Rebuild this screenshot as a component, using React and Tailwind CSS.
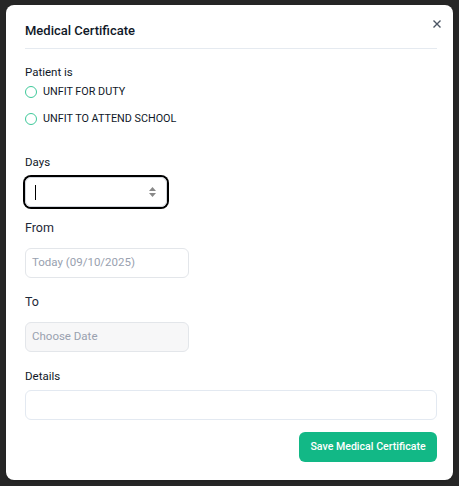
import React from "react";

const Radio = ({ label, className }) => (
  <label className={`flex items-center gap-[6px] h-4 ${className}`}>
    <span className="w-3 h-3 rounded-full border-[1.5px] border-[#3fc99a] bg-white flex-shrink-0"></span>
    <span className="text-[10.8px] leading-4 text-gray-900">{label}</span>
  </label>
);

const App = () => {
  return (
    <div
      className="h-[486px] w-[459px] bg-[#262626] pt-[5px] pl-[6px] overflow-hidden"
      style={{ fontFamily: 'Roboto, "Noto Sans", sans-serif' }}
    >
      <div className="relative w-[447px] h-[475px] bg-white rounded-lg pl-[19px] pr-[16px] shadow">
        <button className="absolute left-[427px] top-[15px] w-2 h-2">
          <svg width="8" height="8" viewBox="0 0 8 8" className="block">
            <path d="M0.5 0.5L7.5 7.5M7.5 0.5L0.5 7.5" stroke="#4b5563" strokeWidth="1.4" />
          </svg>
        </button>
        <div className="h-[44px] pt-[17px] border-b border-[#e5eaf0]">
          <h2 className="text-[13px] leading-[18px] font-medium text-gray-900">
            Medical Certificate
          </h2>
        </div>

        <p className="mt-[15px] text-[11.5px] leading-4 text-gray-900">Patient is</p>
        <Radio label="UNFIT FOR DUTY" className="mt-[4px]" />
        <Radio label="UNFIT TO ATTEND SCHOOL" className="mt-[11px]" />

        <p className="mt-[27px] text-[11.5px] leading-4 text-gray-900">Days</p>
        <div className="mt-[7px] w-[142px] h-[30px] rounded-md border border-gray-300 ring-2 ring-black flex items-center pl-[9px] pr-[10px] justify-between">
          <span className="w-px h-[15px] bg-black"></span>
          <span className="flex flex-col items-center gap-[2px]">
            <svg width="7" height="4" viewBox="0 0 7 4"><path d="M0 4L3.5 0L7 4Z" fill="#888" /></svg>
            <svg width="7" height="4" viewBox="0 0 7 4"><path d="M0 0L3.5 4L7 0Z" fill="#888" /></svg>
          </span>
        </div>

        <p className="mt-[12px] text-[12.5px] leading-[18px] text-gray-800">From</p>
        <div className="mt-[11px] w-[164px] h-[30px] rounded-md border border-[#e3e6ea] bg-white flex items-center px-[6px]">
          <span className="text-[11.5px] text-gray-400">Today (09/10/2025)</span>
        </div>

        <p className="mt-[15px] text-[12.5px] leading-[18px] text-gray-800">To</p>
        <div className="mt-[11px] w-[164px] h-[30px] rounded-md border border-[#e3e6ea] bg-[#f7f7f8] flex items-center px-[6px]">
          <span className="text-[11.5px] text-gray-400">Choose Date</span>
        </div>

        <p className="mt-[16px] text-[11.5px] leading-4 text-gray-900">Details</p>
        <div className="mt-[6px] w-full h-[30px] rounded-md border border-[#e3e9f1] bg-white"></div>

        <div className="mt-[12px] flex justify-end">
          <button className="h-[30px] w-[138px] rounded-md bg-[#12b886] text-white text-[10.6px] font-medium">
            Save Medical Certificate
          </button>
        </div>
      </div>
    </div>
  );
};

export default App;
